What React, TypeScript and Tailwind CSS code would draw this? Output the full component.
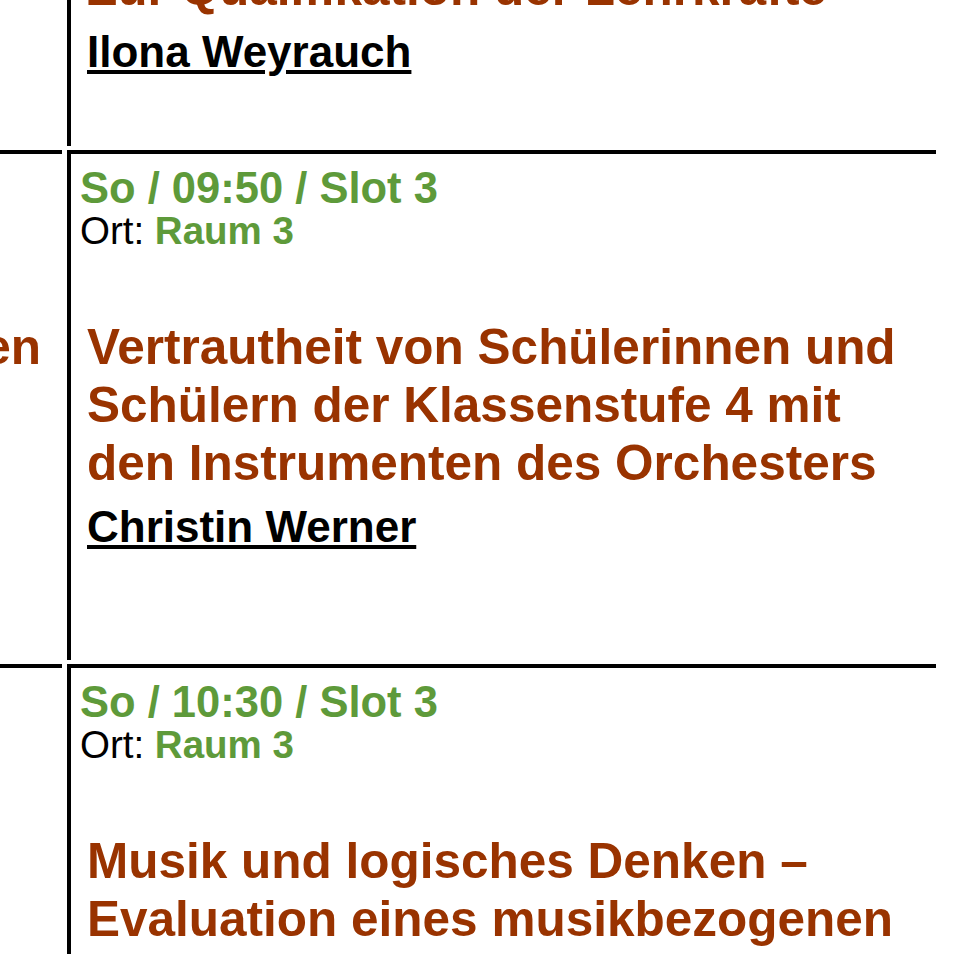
const GREEN = 'text-[#5e9a3a]';

type Slot = {
  day: string;
  time: string;
  slot: string;
  room: string;
  title: string[];
  speaker: string;
  side?: string;
  padBottom: string;
};

const SLOTS: Slot[] = [
  {
    day: 'So',
    time: '09:10',
    slot: 'Slot 3',
    room: 'Raum 3',
    title: ['Musik in der Grundschule:', 'Zur Qualifikation der Lehrkräfte'],
    speaker: 'Ilona Weyrauch',
    padBottom: 'pb-[69px]',
  },
  {
    day: 'So',
    time: '09:50',
    slot: 'Slot 3',
    room: 'Raum 3',
    title: ['Vertrautheit von Schülerinnen und Schülern der Klassenstufe 4 mit den Instrumenten des Orchesters'],
    speaker: 'Christin Werner',
    side: 'Einzelbeiträgen',
    padBottom: 'pb-[108px]',
  },
  {
    day: 'So',
    time: '10:30',
    slot: 'Slot 3',
    room: 'Raum 3',
    title: ['Musik und logisches Denken – Evaluation eines musikbezogenen Förderprogramms'],
    speaker: 'Sabine Kramer',
    padBottom: 'pb-[108px]',
  },
];

function SlotRow({ s }: { s: Slot }) {
  return (
    <>
      <div className="flex justify-end border-t-4 border-black pr-[21px] pt-[164px]">
        {s.side && (
          <span className="whitespace-nowrap text-[49.5px] font-bold leading-[58px] text-[#993300]">
            {s.side}
          </span>
        )}
      </div>
      <div className={`border-l-4 border-t-4 border-black pl-[9px] pr-[20px] pt-[11px] ${s.padBottom}`}>
        <div className={`text-[43.5px] font-bold leading-[46px] ${GREEN}`}>
          {s.day} / {s.time} / {s.slot}
        </div>
        <div className="text-[38.5px] leading-[40px] text-black">
          Ort: <span className={`font-bold ${GREEN}`}>{s.room}</span>
        </div>
        <div className="ml-[7px] mt-[67px]">
          <h2 className="text-[49.5px] font-bold leading-[58px] text-[#993300]">
            {s.title.map((line, i) => (
              <span key={i} className="block">
                {line}
              </span>
            ))}
          </h2>
          <a href="#" className="mt-[10px] block text-[44px] font-bold leading-[50px] text-black underline">
            {s.speaker}
          </a>
        </div>
      </div>
    </>
  );
}

export default function App() {
  return (
    <div className="h-[954px] w-[955px] overflow-hidden bg-white font-['Liberation_Sans',Arial,sans-serif]">
      <div className="-mt-[267px] grid w-[936px] grid-cols-[62px_1fr] gap-x-[5px] gap-y-[4px]">
        {SLOTS.map((s) => (
          <SlotRow key={s.time} s={s} />
        ))}
      </div>
    </div>
  );
}
